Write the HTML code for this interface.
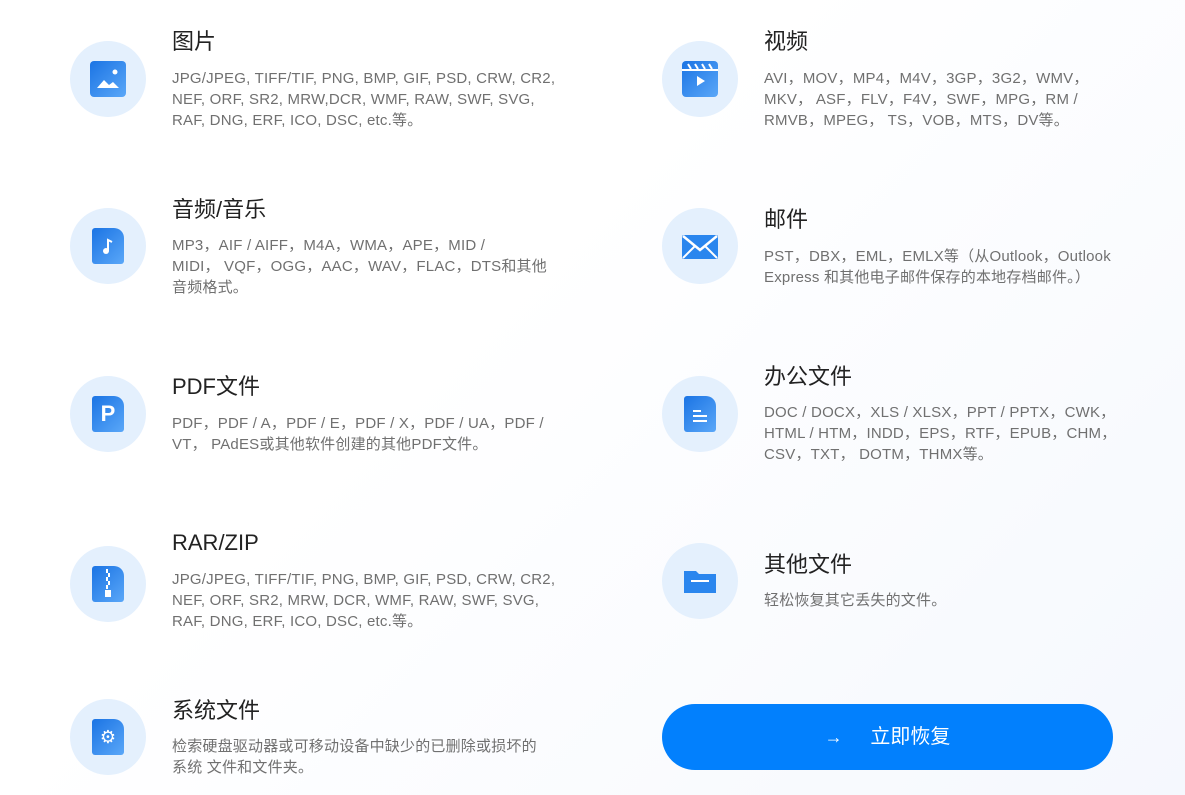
<!DOCTYPE html><html><head><meta charset="utf-8"><style>
body{margin:0;width:1185px;height:795px;overflow:hidden;background:linear-gradient(135deg,#ffffff 40%,#f5f8fe 100%);font-family:"Liberation Sans","Noto Sans CJK SC",sans-serif;position:relative}
.c{position:absolute;width:76px;height:76px;border-radius:50%;background:#e4f0fd}
.c .i{position:absolute;left:20px;top:20px;width:36px;height:36px;border-radius:4px;background:linear-gradient(135deg,#1b74e4,#5aa7f8)}
.t{position:absolute;font-size:22px;line-height:30px;color:#222;white-space:nowrap}
.b{position:absolute;font-size:15px;line-height:21px;color:#707070;white-space:nowrap;letter-spacing:0.2px}
.btn{position:absolute;left:662px;top:704px;width:451px;height:66px;border-radius:33px;background:#0280fd;color:#fff;font-size:20px;line-height:66px;text-align:center}
</style></head><body>
<div class="c" style="left:70px;top:41px"><div class="i"><svg width="36" height="36"><circle cx="25" cy="11" r="2.5" fill="#fff"/><path d="M7 27 L14 19 L19 24 L23 21 L29 27Z" fill="#fff"/></svg></div></div>
<div class="t" style="left:172px;top:27px">图片</div>
<div class="b" style="left:172px;top:68px">JPG/JPEG, TIFF/TIF, PNG, BMP, GIF, PSD, CRW, CR2,<br>NEF, ORF, SR2, MRW,DCR, WMF, RAW, SWF, SVG,<br>RAF, DNG, ERF, ICO, DSC, etc.等。</div>

<div class="c" style="left:662px;top:41px"><div class="i"><svg width="36" height="36"><rect x="0" y="8" width="36" height="2" fill="#fff"/><path d="M15 15 L23 20 L15 25Z" fill="#fff"/><path d="M6 3l3 5M13 3l3 5M20 3l3 5M27 3l3 5" stroke="#fff" stroke-width="2"/></svg></div></div>
<div class="t" style="left:764px;top:27px">视频</div>
<div class="b" style="left:764px;top:68px">AVI，MOV，MP4，M4V，3GP，3G2，WMV，<br>MKV， ASF，FLV，F4V，SWF，MPG，RM /<br>RMVB，MPEG， TS，VOB，MTS，DV等。</div>

<div class="c" style="left:70px;top:208px"><div class="i" style="left:22px;width:32px;border-radius:3px 10px 3px 3px"><svg width="32" height="36"><circle cx="14" cy="23" r="3" fill="#fff"/><path d="M16 23V12l4 2" stroke="#fff" stroke-width="2" fill="none"/></svg></div></div>
<div class="t" style="left:172px;top:195px">音频/音乐</div>
<div class="b" style="left:172px;top:235px">MP3，AIF / AIFF，M4A，WMA，APE，MID /<br>MIDI， VQF，OGG，AAC，WAV，FLAC，DTS和其他<br>音频格式。</div>

<div class="c" style="left:662px;top:208px"><div class="i" style="background:none"><svg width="36" height="36"><rect x="0" y="7" width="36" height="24" rx="2" fill="#2a86ee"/><path d="M1 8 L18 22 L35 8" stroke="#fff" stroke-width="2.5" fill="none"/><path d="M1 30 L13 18M35 30 L23 18" stroke="#fff" stroke-width="2"/></svg></div></div>
<div class="t" style="left:764px;top:205px">邮件</div>
<div class="b" style="left:764px;top:246px">PST，DBX，EML，EMLX等（从Outlook，Outlook<br>Express 和其他电子邮件保存的本地存档邮件。）</div>

<div class="c" style="left:70px;top:376px"><div class="i" style="left:22px;width:32px;border-radius:3px 10px 3px 3px"><div style="color:#fff;font-weight:bold;font-size:22px;text-align:center;line-height:36px">P</div></div></div>
<div class="t" style="left:172px;top:372px">PDF文件</div>
<div class="b" style="left:172px;top:413px">PDF，PDF / A，PDF / E，PDF / X，PDF / UA，PDF /<br>VT， PAdES或其他软件创建的其他PDF文件。</div>

<div class="c" style="left:662px;top:376px"><div class="i" style="left:22px;width:32px;border-radius:3px 10px 3px 3px"><svg width="32" height="36"><path d="M9 15h8M9 20h14M9 25h14" stroke="#fff" stroke-width="2"/></svg></div></div>
<div class="t" style="left:764px;top:362px">办公文件</div>
<div class="b" style="left:764px;top:402px">DOC / DOCX，XLS / XLSX，PPT / PPTX，CWK，<br>HTML / HTM，INDD，EPS，RTF，EPUB，CHM，<br>CSV，TXT， DOTM，THMX等。</div>

<div class="c" style="left:70px;top:546px"><div class="i" style="left:22px;width:32px;border-radius:3px 10px 3px 3px"><svg width="32" height="36"><path d="M15 3v4M17 7v4M15 11v4M17 15v4M15 19v4" stroke="#fff" stroke-width="2"/><rect x="13" y="24" width="6" height="7" fill="#fff"/></svg></div></div>
<div class="t" style="left:172px;top:528px">RAR/ZIP</div>
<div class="b" style="left:172px;top:569px">JPG/JPEG, TIFF/TIF, PNG, BMP, GIF, PSD, CRW, CR2,<br>NEF, ORF, SR2, MRW, DCR, WMF, RAW, SWF, SVG,<br>RAF, DNG, ERF, ICO, DSC, etc.等。</div>

<div class="c" style="left:662px;top:543px"><div class="i" style="background:none"><svg width="36" height="36"><path d="M2 8h12l3 3h17v19H2Z" fill="#2a86ee"/><path d="M9 18h18" stroke="#fff" stroke-width="2"/></svg></div></div>
<div class="t" style="left:764px;top:550px">其他文件</div>
<div class="b" style="left:764px;top:590px">轻松恢复其它丢失的文件。</div>

<div class="c" style="left:70px;top:699px"><div class="i" style="left:22px;width:32px;border-radius:3px 10px 3px 3px"><div style="color:#fff;font-size:18px;text-align:center;line-height:36px">⚙</div></div></div>
<div class="t" style="left:172px;top:696px">系统文件</div>
<div class="b" style="left:172px;top:736px">检索硬盘驱动器或可移动设备中缺少的已删除或损坏的<br>系统 文件和文件夹。</div>

<div class="btn"><b style="font-size:18px">→</b>&nbsp;&nbsp;&nbsp;&nbsp;&nbsp;立即恢复</div>
</body></html>
